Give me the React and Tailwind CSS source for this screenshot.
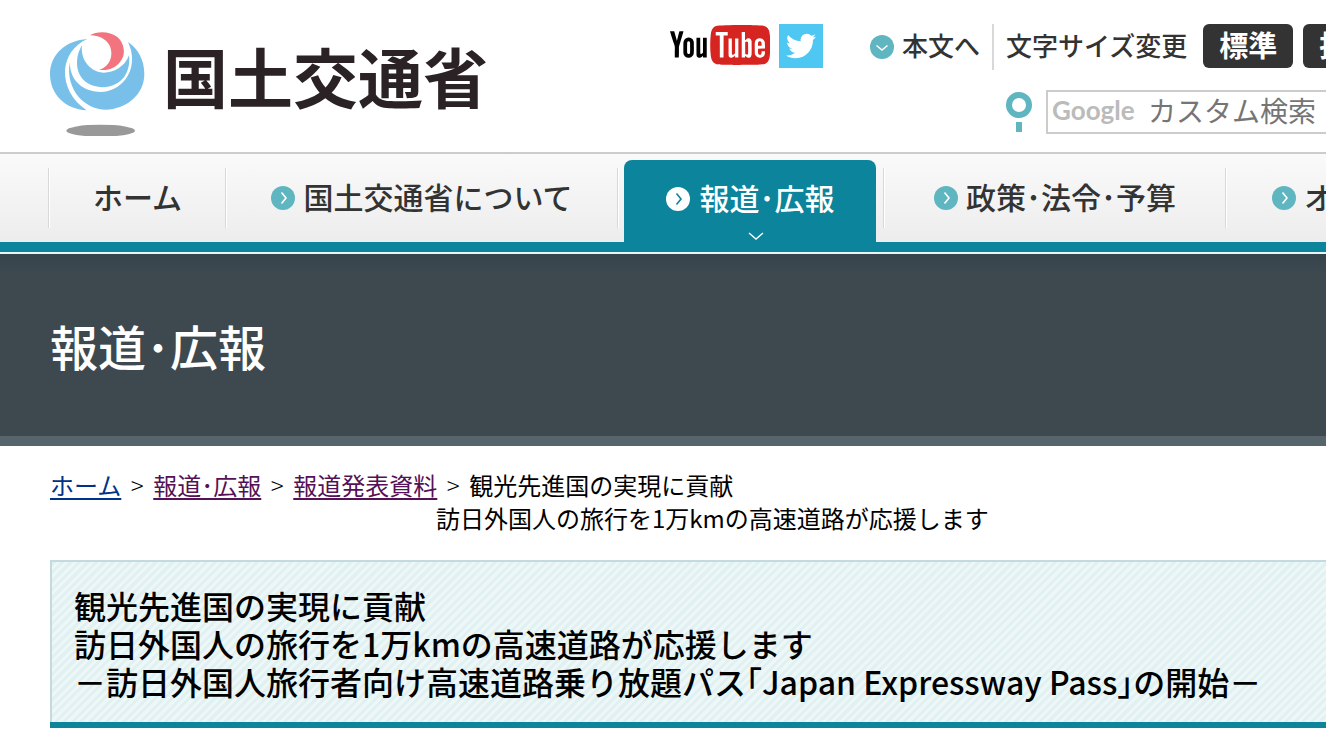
import { useState } from "react";
import { FaTwitter } from "react-icons/fa";
import { ImYoutube2 } from "react-icons/im";

const menu = [
  { label: "ホーム", width: "w-[177px]", icon: false },
  { label: "国土交通省について", width: "w-[392px]", icon: true },
  { label: "報道･広報", width: "w-[266px]", icon: true, active: true },
  { label: "政策･法令･予算", width: "w-[342px]", icon: true },
  { label: "オープンデータ", width: "w-[332px]", icon: true },
];

function Emblem() {
  return (
    <svg viewBox="60 65 285 312" className="h-[104px] w-[95px] shrink-0" aria-hidden="true">
      <g fill="#78c0ea">
        <path d="M172 86C110 90 60 130 60 192C60 250 105 298 170 300C125 270 103 225 105 180C108 140 130 105 172 86Z" />
        <path d="M156 105C128 150 135 225 215 231C280 231 303 180 297 135C285 170 250 187 222 187C185 187 150 152 156 105Z" />
        <path d="M119 155C120 200 145 243 215 245C288 240 328 165 294 95C325 115 343 150 343 192C343 255 285 298 228 298C165 298 106 240 119 155Z" />
      </g>
      <path
        d="M180 75C200 62 240 62 262 80C285 100 288 135 270 155C255 175 230 182 208 178C235 170 248 145 243 118C238 90 210 75 180 75Z"
        fill="#f2747e"
      />
      <ellipse cx="212" cy="361" rx="103" ry="18" fill="#999" />
    </svg>
  );
}

function CircleArrow({ active, down }) {
  return (
    <svg viewBox="0 0 24 24" className="size-6 shrink-0" fill="none" aria-hidden="true">
      <circle cx="12" cy="12" r="12" fill={active ? "#fff" : "#5fb5c0"} />
      <path
        d={down ? "M6.5 10.5l5.5 4.5 5.5-4.5" : "M10.5 6.5l4.5 5.5-4.5 5.5"}
        stroke={active ? "#0c849c" : "#fff"}
        strokeWidth="1.6"
      />
    </svg>
  );
}

function Header() {
  const [query, setQuery] = useState("");

  return (
    <header className="flex h-[152px] justify-between pl-[50px]">
      <a href="#" className="flex shrink-0 items-start pt-8 text-[#2a2224]">
        <Emblem />
        <span className="ml-[18px] text-[65px] leading-[86px] font-bold">国土交通省</span>
      </a>

      <div className="ml-[182px] flex flex-1 flex-col pt-6">
        <div className="flex items-start">
          {/* social links */}
          <a href="#" aria-label="YouTube" className="block h-11 w-[100px] shrink-0">
            <svg className="absolute size-0" aria-hidden="true">
              <defs>
                <linearGradient id="yt" gradientUnits="userSpaceOnUse" x1="0" x2="40" y1="0" y2="0">
                  <stop offset="0.4" stopColor="#000" />
                  <stop offset="0.4" stopColor="#d62420" />
                </linearGradient>
              </defs>
            </svg>
            <ImYoutube2 fill="url(#yt)" className="h-[42px] w-[100px]" />
          </a>
          <a
            href="#"
            aria-label="Twitter"
            className="ml-[9px] flex size-11 shrink-0 items-center justify-center bg-[#4ec7f3] text-[30px] text-white"
          >
            <FaTwitter />
          </a>

          <a href="#main" className="ml-[47px] flex h-[46px] shrink-0 items-center gap-2 border-r-2 border-[#d8d8d8] pr-3 text-[26px]">
            <CircleArrow down />
            <span className="pb-1 leading-[42px]">本文へ</span>
          </a>
          <span className="ml-3 shrink-0 text-[26px] leading-[42px]">文字サイズ変更</span>
          <button className="ml-4 h-11 shrink-0 rounded-md bg-[#333] px-4 pb-1 text-[29px] leading-none font-bold text-white">
            標準
          </button>
          <button className="ml-[10px] h-11 shrink-0 rounded-md bg-[#333] px-4 pb-1 text-[29px] leading-none font-bold text-white">
            拡大
          </button>
        </div>

        <div className="mt-5 ml-[336px] flex shrink-0">
          <svg viewBox="0 0 26 42" className="mt-px h-[42px] w-[26px] shrink-0" aria-hidden="true">
            <circle cx="13" cy="14" r="10" fill="none" stroke="#5fb5c0" strokeWidth="6" />
            <rect x="10" y="31" width="6" height="10" fill="#5fb5c0" />
          </svg>
          <label className="ml-[14px] flex h-11 w-[460px] shrink-0 items-center border-2 border-[#ccc] pb-1 pl-1">
            <span className="w-24 font-['Lato'] text-[26px] font-bold text-[#bbb]">Google</span>
            <input
              type="text"
              aria-label="カスタム検索"
              placeholder="カスタム検索"
              value={query}
              onChange={(e) => setQuery(e.target.value)}
              className="min-w-0 flex-1 text-[28px] font-normal outline-none placeholder:text-[#757575]"
            />
          </label>
        </div>
      </div>
    </header>
  );
}

function Menu() {
  return (
    <nav className="border-t-2 border-[#ccc] bg-linear-to-b from-[#fafafa] to-[#ebebeb]">
      <ul className="flex h-22 pl-12 text-[30px]">
        {menu.map((item) =>
          item.active ? (
            <li key={item.label} className={`${item.width} flex shrink-0`}>
              <span className="my-[14px] w-[2px] shrink-0 border-l border-[#d8d8d8] bg-white" />
              <a
                href="#"
                className="mt-[6px] ml-[5px] flex w-[252px] flex-col items-center rounded-t-lg bg-[#0c849c] text-white"
              >
                <span className="mt-4 flex items-center gap-[10px]">
                  <CircleArrow active />
                  <span className="pb-1 leading-[42px]">{item.label}</span>
                </span>
                <svg viewBox="0 0 16 9" className="mt-[10px] ml-3 h-[9px] w-4" fill="none" aria-hidden="true">
                  <path d="M1 1l7 6 7-6" stroke="#fff" strokeWidth="1.4" />
                </svg>
              </a>
            </li>
          ) : (
            <li key={item.label} className={`${item.width} flex shrink-0`}>
              <span className="my-[14px] w-[2px] shrink-0 border-l border-[#d8d8d8] bg-white" />
              <a href="#" className="flex flex-1 items-center justify-center gap-2">
                {item.icon && <CircleArrow />}
                <span className="pb-1 leading-[42px]">{item.label}</span>
              </a>
            </li>
          )
        )}
      </ul>
      <div className="h-3 border-b-2 border-[#e6f5f7] bg-[#0c849c]" />
    </nav>
  );
}

function Separator() {
  return <li className="w-8 text-center font-light">&gt;</li>;
}

function Breadcrumb() {
  return (
    <nav className="mt-[22px] ml-[50px] text-[24px] leading-[33px] font-normal text-black">
      <ol className="flex">
        <li>
          <a href="#" className="text-[#003388] underline underline-offset-3">ホーム</a>
        </li>
        <Separator />
        <li>
          <a href="#" className="text-[#551155] underline underline-offset-3">報道･広報</a>
        </li>
        <Separator />
        <li>
          <a href="#" className="text-[#551155] underline underline-offset-3">報道発表資料</a>
        </li>
        <Separator />
        <li>観光先進国の実現に貢献</li>
      </ol>
      <p className="pl-[386px]">訪日外国人の旅行を1万kmの高速道路が応援します</p>
    </nav>
  );
}

export default function App() {
  return (
    <div className="overflow-x-hidden bg-white pb-[14px] font-['Noto_Sans_CJK_JP',sans-serif] font-medium whitespace-nowrap text-[#333]">
      <Header />
      <Menu />

      <div className="border-b-[10px] border-[#56646b] bg-[#3d494f] bg-linear-to-b from-[#36434a] to-[#3d494f] to-10% py-[55px] pl-[50px]">
        <p className="text-[48px] leading-[72px] text-white">報道･広報</p>
      </div>

      <main id="main">
        <Breadcrumb />
        <div className="mt-[26px] ml-[50px] border-b-6 border-[#0c849c]">
          <div className="border-t-2 border-l-2 border-[#c5dade] bg-[repeating-linear-gradient(135deg,#e1f1f1_0px,#e1f1f1_3px,#eef7f7_3px,#eef7f7_6px)] pt-6 pb-[22px] pl-[22px]">
            <h1 className="text-[32px] leading-[38px] font-medium text-black">
              観光先進国の実現に貢献
              <br />
              訪日外国人の旅行を1万kmの高速道路が応援します
              <br />
              －訪日外国人旅行者向け高速道路乗り放題パス｢Japan Expressway Pass｣の開始－
            </h1>
          </div>
        </div>
      </main>
    </div>
  );
}
